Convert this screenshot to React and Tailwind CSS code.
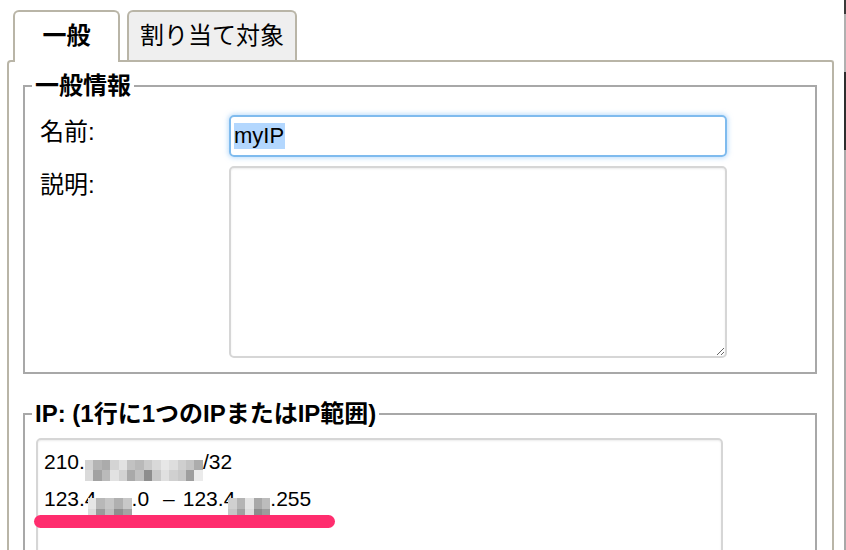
import React from "react";

const FONT = { fontFamily: "'Liberation Sans', 'Noto Sans CJK JP', sans-serif" };

function Pixels({ rows, className }) {
  return (
    <span className={"inline-flex flex-col " + className}>
      {rows.map((row, i) => (
        <span key={i} className="flex flex-1">
          {row.map((c, j) => (
            <span key={j} className={"flex-1 " + c} />
          ))}
        </span>
      ))}
    </span>
  );
}

const BLUR1 = [
  ["bg-[#d2d2d2]", "bg-[#b4b4b4]", "bg-[#ababab]", "bg-[#d4d4d4]", "bg-[#e2e2e2]", "bg-[#c2c2c2]", "bg-[#b9b9b9]", "bg-[#cacaca]", "bg-[#d9d9d9]", "bg-[#e7e7e7]", "bg-[#dedede]", "bg-[#cfcfcf]", "bg-[#c4c4c4]", "bg-[#acacac]"],
  ["bg-[#dadada]", "bg-[#a2a2a2]", "bg-[#bababa]", "bg-[#e2e2e2]", "bg-[#d2d2d2]", "bg-[#a9a9a9]", "bg-[#c0c0c0]", "bg-[#8e8e8e]", "bg-[#c9c9c9]", "bg-[#e0e0e0]", "bg-[#d0d0d0]", "bg-[#c8c8c8]", "bg-[#9e9e9e]", "bg-[#ebebeb]"],
];
const BLUR2 = [
  ["bg-[#e6e6e6]", "bg-[#b8b8b8]", "bg-[#c6c6c6]", "bg-[#b0b0b0]", "bg-[#c8c8c8]"],
  ["bg-[#dcdcdc]", "bg-[#9a9a9a]", "bg-[#bdbdbd]", "bg-[#8f8f8f]", "bg-[#a4a4a4]"],
];
const BLUR3 = [
  ["bg-[#d0d0d0]", "bg-[#b4b4b4]", "bg-[#e4e4e4]", "bg-[#a8a8a8]", "bg-[#bcbcbc]"],
  ["bg-[#c6c6c6]", "bg-[#a0a0a0]", "bg-[#dcdcdc]", "bg-[#8c8c8c]", "bg-[#9c9c9c]"],
];

export default function App() {
  return (
    <div className="w-[846px] h-[550px] overflow-hidden bg-white flex text-black" style={FONT}>
      <div className="flex-1 flex flex-col min-w-0">
        {/* Tabs */}
        <div className="flex items-end pl-[13px] pt-[10px] gap-[7px]">
          <div className="relative z-10 -mb-[2px] w-[107px] h-[52px] border-2 border-b-0 border-[#b9b5a7] rounded-t-[6px] bg-white flex items-center justify-center pb-[2px] text-[24px] font-bold leading-none">
            一般
          </div>
          <div className="w-[170px] h-[50px] border-2 border-b-0 border-[#b9b5a7] rounded-t-[6px] bg-[#efefef] flex items-center justify-center text-[24px] leading-none">
            割り当て対象
          </div>
        </div>

        {/* Panel */}
        <div className="ml-[7px] mr-[10px] flex-1 border-2 border-b-0 border-[#b9b5a7] rounded-tl-[4px] rounded-tr-[3px] pl-[14px] pr-[15px] pt-[11px]">
          <fieldset className="border-2 border-[#a8a8a8] pl-[7px] pr-[15px] pt-[16px] pb-[14px]">
            <legend className="px-[3px] text-[24px] font-bold leading-[26px]">一般情報</legend>
            <div className="grid grid-cols-[189px_498px] gap-y-[9px] pl-[8px]">
              <div className="pt-[4px] text-[24px] leading-[26px]">名前:</div>
              <div className="h-[42px] rounded-[5px] border-2 border-[#7fbbee] shadow-[0_0_5px_1px_rgba(130,190,245,0.55)] flex items-center px-[3px]">
                <span className="bg-[#b3d7fe] text-[22px] leading-[26px] pr-[1px]">myIP</span>
              </div>
              <div className="pt-[6px] text-[24px] leading-[26px]">説明:</div>
              <textarea
                className="h-[192px] w-[498px] rounded-[5px] border-2 border-[#d6d6d6] shadow-[inset_0_1px_2px_rgba(0,0,0,0.08)] resize-y outline-none"
                defaultValue=""
              />
            </div>
          </fieldset>

          <fieldset className="mt-[27px] border-2 border-b-0 border-[#a8a8a8] pl-[7px] pr-[15px] pt-[11px]">
            <legend className="px-[3px] text-[24px] font-bold leading-[26px]">IP: (1行に1つのIPまたはIP範囲)</legend>
            <div className="relative pl-[4px]">
              <div className="w-[687px] h-[200px] rounded-[5px] border-2 border-[#d6d6d6] shadow-[inset_0_1px_2px_rgba(0,0,0,0.08)] px-[6px] pt-[4px] text-[21px] leading-[35px] whitespace-nowrap">
                <div>
                  210.
                  <Pixels rows={BLUR1} className="w-[118px] h-[21px] align-[-1px]" />
                  /32
                </div>
                <div>
                  123.4
                  <Pixels rows={BLUR2} className="-ml-[9px] w-[44px] h-[21px] align-[-3px]" />
                  .0
                  <span className="ml-[14px] mr-[8px]">–</span>
                  123.4
                  <Pixels rows={BLUR3} className="-ml-[7px] w-[42px] h-[21px] align-[-3px]" />
                  .255
                </div>
              </div>
              <div className="absolute left-[2px] top-[77px] w-[301px] h-[13px] rounded-full bg-[#ff2d6e]" />
            </div>
          </fieldset>
        </div>
      </div>

      {/* right edge strip */}
      <div className="w-[2px] flex flex-col">
        <div className="h-[14px] bg-[#3a3a3a]" />
        <div className="h-[58px] bg-[#b0b0b0]" />
        <div className="h-[78px] bg-[#2e2e2e]" />
        <div className="flex-1 bg-[#a8a8a8]" />
      </div>
    </div>
  );
}
